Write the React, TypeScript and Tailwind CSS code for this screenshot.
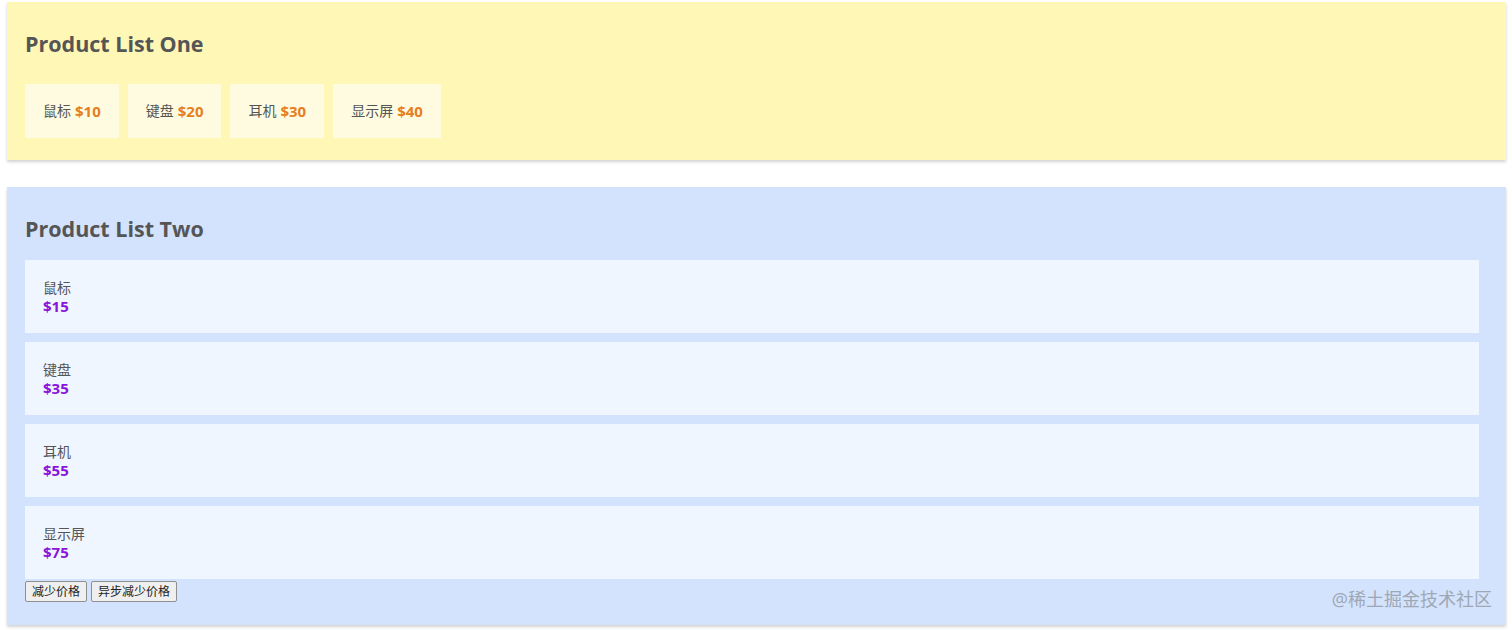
import React from "react";

const listOne = [
  { name: "鼠标", price: 10 },
  { name: "键盘", price: 20 },
  { name: "耳机", price: 30 },
  { name: "显示屏", price: 40 },
];

const listTwo = [
  { name: "鼠标", price: 15 },
  { name: "键盘", price: 35 },
  { name: "耳机", price: 55 },
  { name: "显示屏", price: 75 },
];

export default function App() {
  return (
    <div className="min-h-screen bg-white pl-[7px] pr-[6px] pt-[2px] font-['Open_Sans','Noto_Sans_CJK_SC',sans-serif] text-[#555]">
      {/* Product List One */}
      <section className="bg-[#fff7b5] pl-[18px] pr-[27px] pt-[27px] pb-[22px] shadow-[0_2px_3px_rgba(0,0,0,0.18)]">
        <h2 className="mb-[25px] text-[21.5px] font-bold leading-[30px] text-[#555]">Product List One</h2>
        <ul className="flex gap-[9px]">
          {listOne.map((p) => (
            <li key={p.name} className="flex h-[54px] items-center gap-[4px] bg-[#fffbe0] px-[18px] text-[14px] leading-[20px]">
              <span>{p.name}</span>
              <span className="text-[15px] font-bold leading-[20px] text-[#e67e22]">${p.price}</span>
            </li>
          ))}
        </ul>
      </section>

      {/* Product List Two */}
      <section className="relative mt-[27px] bg-[#d3e3fd] pl-[18px] pr-[27px] pt-[27px] pb-[23px] shadow-[0_2px_3px_rgba(0,0,0,0.18)]">
        <h2 className="mb-[16px] text-[21.5px] font-bold leading-[30px] text-[#555]">Product List Two</h2>
        <ul className="flex flex-col gap-[9px]">
          {listTwo.map((p) => (
            <li key={p.name} className="bg-[#eff6ff] px-[18px] pt-[19px] pb-[18px] text-[14px] leading-[18px]">
              <div>{p.name}</div>
              <div className="text-[15px] font-bold text-[#8a14d9]">${p.price}</div>
            </li>
          ))}
        </ul>
        <div className="mt-[2px] flex gap-[4px]">
          <button className="h-[21px] rounded-[2px] border border-[#8f8f8f] bg-[#efefef] px-[6px] text-[12px] font-normal leading-[19px] text-[#222]">
            减少价格
          </button>
          <button className="h-[21px] rounded-[2px] border border-[#8f8f8f] bg-[#efefef] px-[6px] text-[12px] font-normal leading-[19px] text-[#222]">
            异步减少价格
          </button>
        </div>
        <span className="absolute right-[14px] bottom-[16px] text-[18px] leading-[20px] text-[#9ea7b4]">
          @稀土掘金技术社区
        </span>
      </section>
    </div>
  );
}
